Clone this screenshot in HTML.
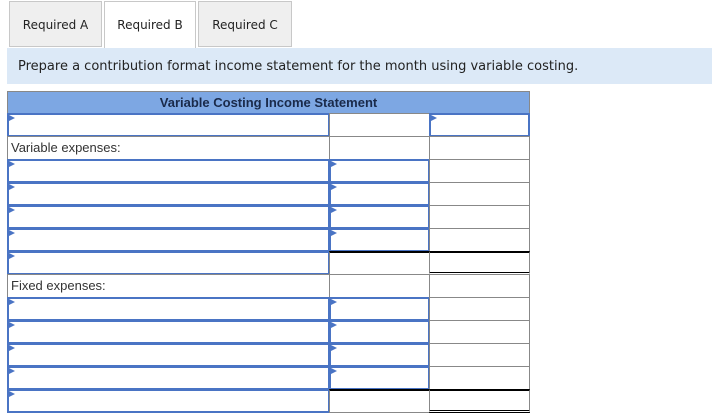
<!DOCTYPE html>
<html><head><meta charset="utf-8"><style>
body{margin:0;width:712px;height:418px;background:#fff;font-family:"DejaVu Sans","Liberation Sans",sans-serif;position:relative;overflow:hidden}
.tab{position:absolute;top:1px;height:46px;border:1px solid #c8c8c8;background:#efefef;font-size:12px;color:#222;text-align:center;line-height:47px;box-sizing:border-box}
.bar{position:absolute;left:7px;top:48px;width:705px;height:36px;background:#dce9f7;font-size:13px;color:#222;line-height:38px;padding-left:11px;box-sizing:border-box}
.hdr{position:absolute;left:7px;top:91px;width:523px;height:23px;background:#7da7e3;border:1px solid #888;box-sizing:border-box;font-family:"Liberation Sans",sans-serif;font-weight:bold;font-size:13px;text-align:center;line-height:21px;color:#1a2a4a}
.c{position:absolute;height:24px;border:1px solid #888;box-sizing:border-box;background:#fff;font-family:"Liberation Sans",sans-serif;font-size:13px;color:#333;line-height:22px;padding-left:3px}
.in{border:2px solid #4a74c4}
.in:before{content:"";position:absolute;left:0;top:0;border-left:6px solid #4a74c4;border-top:3px solid transparent;border-bottom:3px solid transparent}
.tt{border-top:2px solid #000}
.db{border-bottom:3px double #000}
</style></head><body>
<div class="tab" style="left:9px;width:93px">Required A</div>
<div class="tab" style="left:104px;width:92px;background:#fff;height:48px">Required B</div>
<div class="tab" style="left:198px;width:94px">Required C</div>
<div class="bar">Prepare a contribution format income statement for the month using variable costing.</div>
<div class="hdr">Variable Costing Income Statement</div>

<div class="c in" style="left:7px;top:113px;width:323px"></div>
<div class="c" style="left:329px;top:113px;width:101px"></div>
<div class="c in" style="left:429px;top:113px;width:101px"></div>
<div class="c" style="left:7px;top:136px;width:323px">Variable expenses:</div>
<div class="c" style="left:329px;top:136px;width:101px"></div>
<div class="c" style="left:429px;top:136px;width:101px"></div>
<div class="c in" style="left:7px;top:159px;width:323px"></div><div class="c in" style="left:329px;top:159px;width:101px"></div><div class="c" style="left:429px;top:159px;width:101px"></div>
<div class="c in" style="left:7px;top:182px;width:323px"></div><div class="c in" style="left:329px;top:182px;width:101px"></div><div class="c" style="left:429px;top:182px;width:101px"></div>
<div class="c in" style="left:7px;top:205px;width:323px"></div><div class="c in" style="left:329px;top:205px;width:101px"></div><div class="c" style="left:429px;top:205px;width:101px"></div>
<div class="c in" style="left:7px;top:228px;width:323px"></div><div class="c in" style="left:329px;top:228px;width:101px"></div><div class="c" style="left:429px;top:228px;width:101px"></div>
<div class="c in" style="left:7px;top:251px;width:323px"></div><div class="c tt" style="left:329px;top:251px;width:101px"></div><div class="c tt db" style="left:429px;top:251px;width:101px"></div>
<div class="c" style="left:7px;top:274px;width:323px">Fixed expenses:</div>
<div class="c" style="left:329px;top:274px;width:101px"></div>
<div class="c" style="left:429px;top:274px;width:101px"></div>
<div class="c in" style="left:7px;top:297px;width:323px"></div><div class="c in" style="left:329px;top:297px;width:101px"></div><div class="c" style="left:429px;top:297px;width:101px"></div>
<div class="c in" style="left:7px;top:320px;width:323px"></div><div class="c in" style="left:329px;top:320px;width:101px"></div><div class="c" style="left:429px;top:320px;width:101px"></div>
<div class="c in" style="left:7px;top:343px;width:323px"></div><div class="c in" style="left:329px;top:343px;width:101px"></div><div class="c" style="left:429px;top:343px;width:101px"></div>
<div class="c in" style="left:7px;top:366px;width:323px"></div><div class="c in" style="left:329px;top:366px;width:101px"></div><div class="c" style="left:429px;top:366px;width:101px"></div>
<div class="c in" style="left:7px;top:389px;width:323px"></div><div class="c tt" style="left:329px;top:389px;width:101px"></div><div class="c tt db" style="left:429px;top:389px;width:101px"></div>
</body></html>
